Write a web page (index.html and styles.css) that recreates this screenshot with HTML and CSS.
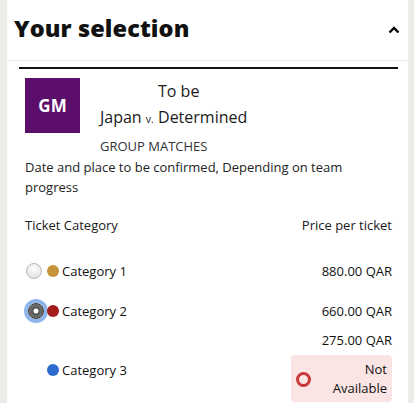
FILE: index.html
```html
<!DOCTYPE html>
<html>
<head>
<meta charset="utf-8">
<link rel="stylesheet" href="styles.css">
</head>
<body>
<div class="panel">
  <div class="header">
    <h1 class="title">Your selection</h1>
    <svg class="chevron" width="12" height="8" viewBox="0 0 12 8"><path d="M1.5 6.5 L6 2 L10.5 6.5" fill="none" stroke="#000" stroke-width="2.4"/></svg>
  </div>
  <div class="content">
    <div class="rule"></div>
    <div class="match">
      <div class="badge">GM</div>
      <div class="match-info">
        <div class="teams"><span class="tobe">To be</span><span>Japan <small class="vs">v.</small> Determined</span></div>
        <div class="stage">GROUP MATCHES</div>
      </div>
    </div>
    <p class="note">Date and place to be confirmed, Depending on team progress</p>
    <div class="cols">
      <span>Ticket Category</span>
      <span>Price per ticket</span>
    </div>
    <div class="row r1">
      <span class="radio"></span>
      <span class="dot gold"></span>
      <span class="cat">Category 1</span>
      <span class="price">880.00 QAR</span>
    </div>
    <div class="row r2">
      <span class="radio checked"></span>
      <span class="dot red"></span>
      <span class="cat">Category 2</span>
      <span class="price">660.00 QAR</span>
    </div>
    <div class="row r3">
      <span class="radio-space"></span>
      <span class="dot blue"></span>
      <span class="cat">Category 3</span>
      <div class="price-col">
        <span class="price">275.00 QAR</span>
        <div class="na">
          <span class="na-ring"></span>
          <span class="na-text">Not<br>Available</span>
        </div>
      </div>
    </div>
  </div>
</div>
</body>
</html>
```
FILE: styles.css
```css
html, body {
  margin: 0;
  padding: 0;
  background: #ecece8;
  font-family: "Open Sans", "Noto Sans", sans-serif;
  color: #111;
}
.panel {
  margin: 0 6px 0 7px;
  background: #fff;
  height: 403px;
  overflow: hidden;
}
.header {
  height: 61px;
  border-bottom: 1px solid #e6e6e4;
  display: flex;
  align-items: center;
  justify-content: space-between;
  padding: 0 8px 0 7px;
  box-sizing: border-box;
}
.title {
  margin: 0;
  font-size: 23.5px;
  font-weight: 800;
  letter-spacing: 0.1px;
  position: relative;
  top: -2px;
}
.chevron {
  position: relative;
  top: 0px;
}
.content {
  padding: 6px 10px 0 12px;
}
.rule {
  height: 2px;
  background: #111;
}
.match {
  display: flex;
  margin: 9px 0 0 6px;
  gap: 20px;
}
.badge {
  width: 55px;
  height: 55px;
  background: #5c0f6a;
  color: #fff;
  font-weight: 700;
  font-size: 17px;
  display: flex;
  align-items: center;
  justify-content: center;
  padding-bottom: 1px;
  box-sizing: border-box;
}
.match-info {
  display: flex;
  flex-direction: column;
}
.teams {
  display: flex;
  flex-direction: column;
  font-size: 16px;
  line-height: 26px;
  color: #1a1a1a;
}
.tobe {
  padding-left: 58px;
}
.vs {
  font-size: 10.5px;
}
.stage {
  font-size: 13px;
  line-height: 22px;
  margin-top: 3px;
  color: #333;
}
.note {
  margin: 0 16px 0 6px;
  font-size: 13px;
  line-height: 20px;
  color: #222;
}
.cols {
  display: flex;
  justify-content: space-between;
  font-size: 13px;
  margin: 18px 6px 0 6px;
  line-height: 20px;
  color: #1a1a1a;
}
.row {
  display: flex;
  align-items: center;
  margin: 0 6px 0 6px;
  font-size: 13px;
  color: #111;
}
.r1 { margin-top: 26px; height: 20px; }
.r2 { margin-top: 20px; height: 20px; }
.r3 { margin-top: 0; align-items: flex-start; }
.radio, .radio-space {
  width: 16px;
  height: 16px;
  border-radius: 50%;
  box-sizing: border-box;
  margin-left: 1px;
  flex: none;
}
.radio {
  border: 1px solid #b8b8b8;
  background: radial-gradient(circle at 50% 35%, #ffffff 0%, #e6e6e6 70%, #d2d2d2 100%);
}
.radio.checked {
  border: 1px solid #3a3a3a;
  background: radial-gradient(circle, #fff 0 2.2px, #555 2.8px, #8a8a8a 100%);
  box-shadow: 0 0 0 4px #8fb5ea;
  margin-left: 3px;
  margin-right: -2px;
}
.dot {
  width: 12px;
  height: 12px;
  border-radius: 50%;
  margin-left: 5px;
  flex: none;
}
.gold { background: #c4933a; }
.red { background: #a41b1b; }
.blue { background: #2c6ccf; }
.cat {
  margin-left: 3px;
  flex: 1;
}
.price {
  text-align: right;
}
.r3 .cat { line-height: 16px; margin-top: 41px; }
.r3 .dot { margin-top: 43px; }
.price-col {
  display: flex;
  flex-direction: column;
  align-items: flex-end;
  padding-top: 9px;
}
.price-col .price {
  line-height: 20px;
}
.na {
  margin-top: 5px;
  width: 101px;
  height: 47px;
  background: #fbe4e4;
  border-radius: 4px;
  display: flex;
  align-items: center;
  justify-content: space-between;
  box-sizing: border-box;
  padding: 0 5px 0 5px;
}
.na-ring {
  width: 15px;
  height: 15px;
  border: 3px solid #c9393a;
  border-radius: 50%;
  box-sizing: border-box;
  margin-top: 2px;
}
.na-text {
  text-align: right;
  font-size: 13px;
  line-height: 19px;
}
```
